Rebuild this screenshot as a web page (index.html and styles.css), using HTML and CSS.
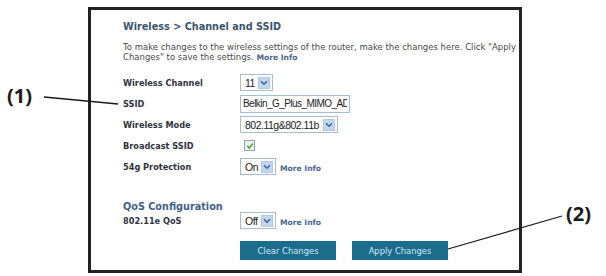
FILE: index.html
```html
<!DOCTYPE html>
<html lang="en">
<head>
  <meta charset="UTF-8" />
  <title>Wireless &gt; Channel and SSID</title>
  <link rel="stylesheet" href="styles.css">
</head>
<body>

  <div class="page">
    <div class="callout callout-one">(1)</div>
    <div class="callout callout-two">(2)</div>
    <svg class="leaders" width="606" height="276" viewBox="0 0 606 276">
      <line x1="44" y1="97" x2="118" y2="104" />
      <line x1="448" y1="249" x2="562" y2="216" />
    </svg>

    <div class="panel">
      <h2 class="panel-title">Wireless &gt; Channel and SSID</h2>
      <p class="intro">
        <span class="intro-line">To make changes to the wireless settings of the router, make the changes here. Click "Apply</span>
        <span class="intro-line">Changes" to save the settings. <a class="more-info" href="#">More Info</a></span>
      </p>

      <div class="form-grid">
        <label class="field-label">Wireless Channel</label>
        <div class="field">
          <div class="select select-channel"><span class="select-value">11</span><span class="select-arrow"><svg width="8" height="6" viewBox="0 0 8 6"><path d="M1 1.2 L4 4.2 L7 1.2" /></svg></span></div>
        </div>

        <label class="field-label">SSID</label>
        <div class="field">
          <input class="text-input" type="text" value="Belkin_G_Plus_MIMO_AD">
        </div>

        <label class="field-label">Wireless Mode</label>
        <div class="field">
          <div class="select select-mode"><span class="select-value">802.11g&amp;802.11b</span><span class="select-arrow"><svg width="8" height="6" viewBox="0 0 8 6"><path d="M1 1.2 L4 4.2 L7 1.2" /></svg></span></div>
        </div>

        <label class="field-label">Broadcast SSID</label>
        <div class="field">
          <span class="checkbox"><svg width="8" height="8" viewBox="0 0 8 8"><path d="M1.2 4 L3.2 6 L6.8 1.6" /></svg></span>
        </div>

        <label class="field-label">54g Protection</label>
        <div class="field">
          <div class="select select-short"><span class="select-value">On</span><span class="select-arrow"><svg width="8" height="6" viewBox="0 0 8 6"><path d="M1 1.2 L4 4.2 L7 1.2" /></svg></span></div>
          <a class="more-info" href="#">More Info</a>
        </div>
      </div>

      <h3 class="section-title">QoS Configuration</h3>
      <div class="form-grid qos-grid">
        <label class="field-label">802.11e QoS</label>
        <div class="field">
          <div class="select select-short"><span class="select-value">Off</span><span class="select-arrow"><svg width="8" height="6" viewBox="0 0 8 6"><path d="M1 1.2 L4 4.2 L7 1.2" /></svg></span></div>
          <a class="more-info" href="#">More Info</a>
        </div>
      </div>

      <div class="actions">
        <button class="action-btn">Clear Changes</button>
        <button class="action-btn">Apply Changes</button>
      </div>
    </div>
  </div>

</body>
</html>
```

FILE: styles.css
```css
* {
  box-sizing: border-box;
  margin: 0;
  padding: 0;
}

body {
  background-color: #ffffff;
  font-family: "DejaVu Sans", Verdana, sans-serif;
  color: #2b2b2b;
}

.page {
  position: relative;
  width: 606px;
  height: 276px;
  padding: 7px 0 0 88px;
}

/* annotation labels and leader lines */
.callout {
  position: absolute;
  font-family: "Open Sans", "DejaVu Sans", sans-serif;
  font-weight: 700;
  font-size: 20px;
  color: #1a1a1a;
}

.callout-one {
  left: 7px;
  top: 82px;
}

.callout-two {
  left: 566px;
  top: 200px;
}

.leaders {
  position: absolute;
  left: 0;
  top: 0;
  pointer-events: none;
  z-index: 2;
}

.leaders line {
  stroke: #1a1a1a;
  stroke-width: 1.3;
}

.panel {
  width: 434px;
  height: 266px;
  border: 3px solid #222;
  padding: 10px 0 0 32px;
  overflow: hidden;
  background: #fff;
}

.panel-title {
  font-size: 9.7px;
  font-weight: 700;
  color: #3a5570;
  margin-top: 1px;
}

.intro {
  margin-top: 11px;
  font-size: 8.5px;
  line-height: 9.5px;
  color: #4a4a4a;
  white-space: nowrap;
}

.intro-line {
  display: block;
}

.more-info {
  font-weight: 700;
  color: #4a6690;
  text-decoration: none;
  font-size: 7.6px;
}

.form-grid {
  display: grid;
  grid-template-columns: 117px auto;
  grid-auto-rows: 21px;
  align-items: center;
  margin-top: 10px;
}

.field-label {
  font-size: 8.2px;
  font-weight: 700;
  color: #2e3440;
}

.field {
  display: flex;
  align-items: center;
  gap: 4px;
}

.field .more-info {
  margin-top: 4px;
}

.select {
  display: flex;
  align-items: center;
  height: 17px;
  border: 1px solid #a8bcd0;
  background: #fff;
  padding: 0 2px 0 4px;
  font-family: "Liberation Sans", Arial, sans-serif;
  font-size: 10.5px;
  letter-spacing: -0.5px;
  color: #222;
}

.select-value {
  flex: 1;
}

.select-arrow {
  display: flex;
  align-items: center;
  justify-content: center;
  width: 12px;
  height: 12px;
  background: #c4d6ee;
  border: 1px solid #b3c8e2;
}

.select-arrow path {
  fill: none;
  stroke: #3564a8;
  stroke-width: 1.6;
}

.select-channel {
  width: 33px;
}

.select-mode {
  width: 98px;
}

.select-short {
  width: 36px;
}

.text-input {
  width: 110px;
  height: 18px;
  border: 1px solid #a8bcd0;
  padding: 0 2px;
  font-family: "Liberation Sans", Arial, sans-serif;
  font-size: 10px;
  letter-spacing: -0.55px;
  color: #222;
  outline: none;
}

.checkbox {
  display: flex;
  align-items: center;
  justify-content: center;
  width: 11px;
  height: 11px;
  margin-left: 4px;
  border: 1px solid #8fa6b8;
  background: #eef3ea;
}

.checkbox path {
  fill: none;
  stroke: #3f9a3a;
  stroke-width: 1.5;
}

.section-title {
  margin-top: 24px;
  font-size: 9.7px;
  font-weight: 700;
  color: #3f6286;
}

.qos-grid {
  margin-top: -2px;
}

.actions {
  display: flex;
  gap: 16px;
  margin: 10px 0 0 117px;
}

.action-btn {
  width: 96px;
  height: 19px;
  border: none;
  background-color: #1c6c8c;
  color: #d2e8f4;
  font-family: "DejaVu Sans", Verdana, sans-serif;
  font-size: 8.4px;
  cursor: pointer;
}
```
